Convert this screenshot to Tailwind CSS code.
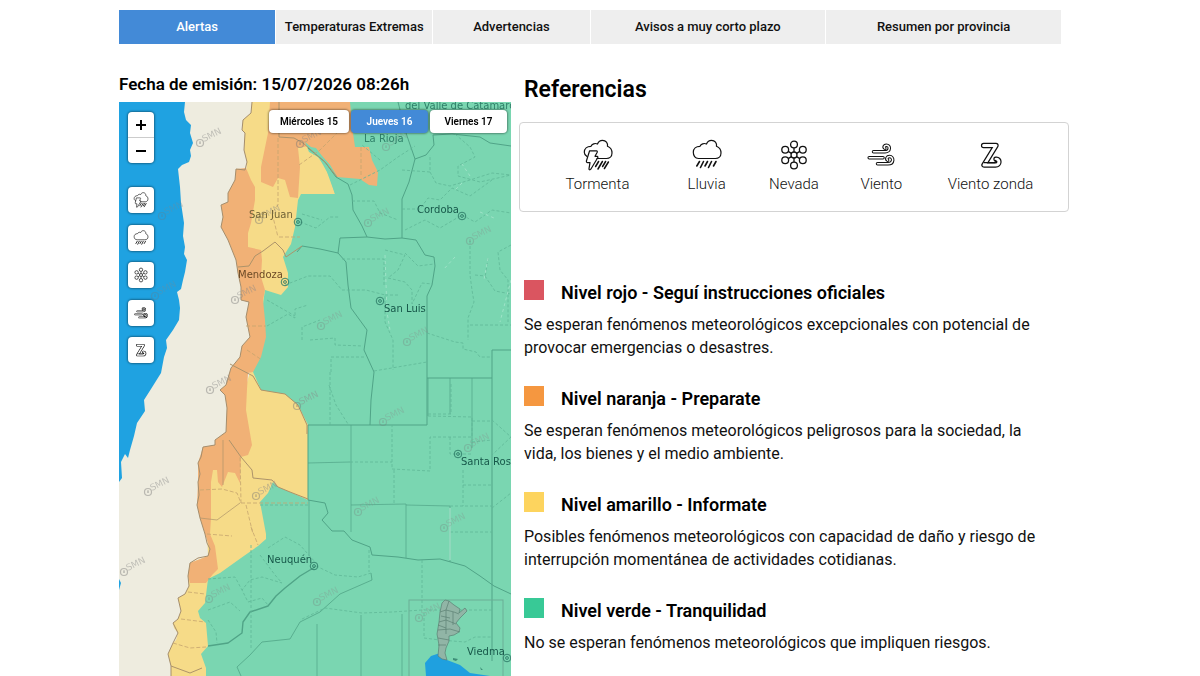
<!DOCTYPE html>
<html lang="es">

<head>
    <meta charset="UTF-8">
    <meta name="viewport" content="width=device-width, initial-scale=1.0">
    <title>Alertas</title>
    <script src="https://cdn.jsdelivr.net/npm/@tailwindcss/browser@4"></script>
</head>

<body class="bg-white font-[Roboto,sans-serif] text-black overflow-x-hidden">

    <!-- Shared icons -->
    <svg class="hidden" aria-hidden="true">
        <symbol id="tormenta" viewBox="0 0 32 32">
            <g fill="none" stroke="currentColor" stroke-width="1.2" stroke-linejoin="round" stroke-linecap="round">
                <path d="M5 17.6C3.2 16.5 2.3 15 2.3 13.3C2.3 9.5 5 7.3 9 7.3C10 5 13 3.8 15.5 5C16.5 2.5 18.5 1.3 20.5 1.3C24 1.3 26 4.3 25.5 7.3C28.5 8.5 30 11 30 14C30 17.5 27.5 19.5 24.5 19.5H15" />
                <path d="M7.6 11.8H14.5C15.3 12 15.5 12.6 15.2 13.3L13 17.3H15.2C16.2 17.6 16 18.6 15.4 19.3L8.8 30.2C8 31.2 6.8 30.8 7 29.6L8 23.6H5.6C4.8 23.5 4.2 22.8 4.4 22Z" />
                <path stroke-width="1.5" d="M16.6 22.5L13.6 27.5M20.4 22.5L16 30M23.6 22.5L20.6 27.5M26.4 23L22.4 29.5" />
            </g>
        </symbol>
        <symbol id="lluvia" viewBox="0 0 32 32">
            <g fill="none" stroke="currentColor" stroke-width="1.2" stroke-linejoin="round" stroke-linecap="round">
                <path d="M7.5 19.5C4 19.5 2.3 16.5 2.3 13.3C2.3 9.5 5 7.3 9 7.3C10 5 13 3.8 15.5 5C16.5 2.5 18.5 1.3 20.5 1.3C24 1.3 26 4.3 25.5 7.3C28.5 8.5 30 11 30 14C30 17.5 27.5 19.5 24.5 19.5Z" />
                <path stroke-width="1.6" d="M8.5 22.5L5.8 27M12.5 22.5L9.5 28.5M16.5 22.5L14 27M20.5 22.5L17.5 28.5M25 22.5L22.5 27" />
            </g>
        </symbol>
        <symbol id="nevada" viewBox="0 0 32 32">
            <g fill="none" stroke="currentColor" stroke-width="1.3">
                <circle cx="16" cy="16" r="3" />
                <circle cx="16" cy="5.5" r="3.4" />
                <circle cx="16" cy="26.5" r="3.4" />
                <circle cx="7.2" cy="10.7" r="3.4" />
                <circle cx="24.8" cy="10.7" r="3.4" />
                <circle cx="7.2" cy="21.3" r="3.4" />
                <circle cx="24.8" cy="21.3" r="3.4" />
                <path d="M16 8.9V13M16 19V23.1M10.2 12.4L13.4 14.4M18.6 17.6L21.8 19.6M21.8 12.4L18.6 14.4M13.4 17.6L10.2 19.6" />
            </g>
        </symbol>
        <symbol id="viento" viewBox="0 0 32 32">
            <g fill="none" stroke-linecap="round">
                <g stroke="currentColor" stroke-width="3.5">
                    <path d="M8.5 12.7H20C25.5 12.7 25.5 6.2 21.3 6.2C19.3 6.2 18.4 8.2 19.8 9.2" />
                    <path d="M4.2 18.7H18" />
                    <path d="M12.5 24.8H23C29 24.8 29 17.6 24.5 17.6C22 17.6 21 20 22.6 21.2" />
                </g>
                <g stroke="#fff" stroke-width="1.5">
                    <path d="M8.5 12.7H20C25.5 12.7 25.5 6.2 21.3 6.2C19.3 6.2 18.4 8.2 19.8 9.2" />
                    <path d="M4.2 18.7H18" />
                    <path d="M12.5 24.8H23C29 24.8 29 17.6 24.5 17.6C22 17.6 21 20 22.6 21.2" />
                </g>
            </g>
        </symbol>
        <symbol id="zonda" viewBox="0 0 32 32">
            <g fill="none" stroke-linejoin="round" stroke-linecap="round">
                <path stroke="currentColor" stroke-width="5.4" d="M8.6 6.5H21L9 26H20.5C25 26 25 19.8 21 20.2" />
                <path stroke="#fff" stroke-width="3" d="M8.6 6.5H21L9 26H20.5C25 26 25 19.8 21 20.2" />
                <path stroke="currentColor" stroke-width="1.1" d="M9 23.6H19.4C21.6 23.4 21.6 21.2 20 21.4" />
            </g>
        </symbol>
    </svg>

    <div class="max-w-[962px] mx-auto pt-[10px]">

        <!-- Tabs -->
        <nav class="mr-5 grid grid-cols-12 gap-px text-[13px] font-medium text-center leading-[34px] text-[#111111] whitespace-nowrap">
            <a href="#" class="col-span-2 bg-[#438ad7] text-white">Alertas</a>
            <a href="#" class="col-span-2 bg-[#eeeeee]">Temperaturas Extremas</a>
            <a href="#" class="col-span-2 bg-[#eeeeee]">Advertencias</a>
            <a href="#" class="col-span-3 bg-[#eeeeee]">Avisos a muy corto plazo</a>
            <a href="#" class="col-span-3 bg-[#eeeeee]">Resumen por provincia</a>
        </nav>

        <main class="mr-3 mt-7 flex gap-2">

            <!-- Map column -->
            <section class="w-[392px] shrink-0">
                <h2 class="text-[17px] leading-6 font-semibold mb-[6px]">Fecha de emisión: 15/07/2026 08:26h</h2>

                <div class="relative overflow-hidden">
                    <svg class="block w-full" viewBox="119 102 392 574" role="img" aria-label="Mapa de alertas">
                        <rect x="119" y="102" width="392" height="574" fill="#eeecdf" />
                        <!-- Ocean -->
                        <path fill="#1fa2e1" d="M119 102H185L184 112L186 120L191 125L190 133L193 143L190 150L191 156L189 162L182 165L178 169L180 187L181 203L184 223L183 236L185 247L184 254L187 260L185 272L183 280L181 289L177 292L179 300L180 308L179 320L173 330L166 340L167 348L164 357L161 373L151 389L144 400L145 411L137 423L134 436L130 450L128 458L125 454L121 462L122 478L119 482Z" />
                        <path fill="#1fa2e1" d="M119 579L121 583L119 590Z" />
                        <!-- Green level -->
                        <path fill="#7ad6b1" d="M511 102H300L290 200L280 250L262 290L250 375L255 480L215 565L203 585L196 612L200 676H511Z" />
                        <!-- Yellow level -->
                        <path fill="#f6db88" d="M252 102L251 113L243 120L242 130L245 133L244 150L247 162L246 172L238 200V235L250 260L262 290L250 372L230 440L205 470L208 556L190 563L188 576L189 586L185 594L178 598L181 611L178 619L173 623L174 628L178 633L176 640L173 643L168 654L171 666V676H206V668L201 654L208 646L206 623L200 618L198 611L205 603L208 579L220 573L241 558L258 546L266 539V534L263 518L260 502L268 493L273 482L278 487L290 492L308 500V425L298 405L285 394L261 390L253 372L265 290L281 295L288 287V273L283 257L291 244L295 227L298 200L301 194H335L327 172L318 156L308 148V102Z" />
                        <!-- Orange level -->
                        <g fill="#f1b176">
                            <path d="M270 102L268 133L261 167V182L273 187L278 178L285 180L290 197L298 198L300 167L298 148L308 146L320 154L330 165L337 177L360 179L369 185L377 186L378 172L372 160L369 147H355L353 133L350 102Z" />
                            <path d="M246 168L251 180L255 187V200L251 223L248 233V247L261 250L262 260L261 277L265 290L263 300L265 320L266 337L261 357L253 372L248 373L247 389L246 410L252 445L248 455L241 457L240 483L235 473L228 472L222 487L218 482L217 470L213 470L211 482V518L210 534L215 546L218 569L213 574L206 583L190 583L188 576L190 563L208 556L210 549L205 534L200 518L197 505L198 482V463L203 447L215 445V440L226 432L227 408L225 395L220 390L226 385L231 368L240 357L242 346L250 337L246 317L249 302L241 300V287L238 273L236 260L228 240L221 227L223 217L221 205L228 202V193L235 180L236 169Z" />
                        </g>
                        <!-- Green wedge next to La Rioja -->
                        <path fill="#7ad6b1" d="M305 142L311 147L316 148L322 156L330 165L338 178L335 194L330 178L324 165L318 157L309 152Z" />

                        <!-- National border -->
                        <path fill="none" stroke="#a58e6d" stroke-width="1" stroke-linejoin="round" d="M252 102L251 113L243 120L242 130L245 133L244 150L247 162L245 170L236 169L235 180L228 193V202L221 205L223 217L221 227L228 240L236 260L238 273L241 287V300L249 302L246 317L250 337L242 346L240 357L231 368L226 385L220 390L225 395L227 408L226 432L215 440V445L203 447L201 457L198 463L200 474L198 482L199 495L197 505L200 518L205 534L207 543L210 549L208 556L198 558L190 563L188 576L189 586L185 594L178 598L181 611L178 619L173 623L178 633L173 643L168 654L171 666V676" />

                        <!-- Province borders -->
                        <g fill="none" stroke="#50a487" stroke-width="1" stroke-linejoin="round">
                            <path d="M308 148L325 162L336 177L348 184L352 195L353 210L362 226L367 237L385 239L402 238L402 199L409 182L415 159L406 133L398 102" />
                            <path d="M415 159L426 155L434 145L433 135L452 134L480 137L490 143L511 146" />
                            <path d="M297 252L302 246L320 249L338 253L340 238L367 237M402 238L416 240L425 255L434 257L435 266L432 285L427 296V425H308" />
                            <path d="M338 253L346 262L348 285L351 308L367 330L364 350L374 372L371 400L370 425" />
                            <path d="M427 378H492V350H511M492 378V661" />
                            <path d="M450 378V414M472 378V448M428 416V378" stroke-width=".7" />
                            <path d="M308 425V500L325 503L328 513L322 520L332 531L344 531L352 540L370 547L372 555L398 557L418 560L440 559L465 566L480 576L494 586L511 594" />
                            <path d="M351 532V425M351 505L406 504V558M406 505L450 506V562M308 463L350 462" stroke-width=".7" />
                            <path d="M315 567L300 576L285 588L276 596L268 606L250 612L243 622L242 633L228 643L208 646" stroke-width="1.4" />
                            <path d="M371 573L372 580L340 594L320 612L300 622L290 639L262 642L250 655L237 667L241 676" stroke-width=".8" />
                            <path d="M361 615V676M402 614V676M317 624V676M309 500V556" stroke-width=".7" />
                        </g>
                        <!-- Borders over warm colors -->
                        <g fill="none" stroke="#ad936a" stroke-width="1">
                            <path d="M238 267L249 266L255 256L263 251L275 242L283 250L286 257L302 246" />
                            <path d="M279 102V137L294 138L303 143L325 162L337 177" />
                            <path d="M230 364L253 376L261 390L285 394L298 405L307 425V434" />
                            <path d="M229 440L241 457L252 470L253 478L272 480L278 487L290 492L308 499" />
                            <path d="M223 440V485M200 518L217 520L240 503" stroke-width=".7" />
                            <path d="M171 666L190 673L202 668" />
                        </g>
                        <!-- Departments -->
                        <g fill="none" stroke="#5fb797" stroke-width=".8" stroke-dasharray="3 2">
                            <path d="M350 185L380 170L398 157L415 146M352 201H374L380 213L398 220M380 160L362 145M402 170L430 172V155M430 172L436 183L450 186L470 180L492 173L511 175" />
                            <path d="M402 209H420L428 198L440 200L452 188L470 196L492 180M405 230L425 220L440 228L462 215L475 222L492 210L511 213M455 134L470 147L475 157L458 166V176L480 182L511 175" />
                            <path d="M300 222L316 228L330 217H340M302 214L322 220M285 285L308 276H330L342 290H366L385 295V322L393 340V370M342 259H384V285M310 340L335 338V345L363 346M330 372V425M331 372V357H364" />
                            <path d="M385 250L405 255L398 270L388 278L405 282L412 290V304L422 283L432 284M405 253L418 266L434 264M385 295H400M374 371L427 362M427 333L455 342L463 343V349L476 352L480 357H492" />
                            <path d="M470 241V275L472 290L474 302L468 318V340M475 275L485 276L495 291L511 294M470 325H511M488 258L485 278M511 245L498 252L500 270L508 280V322" />
                            <path d="M329 385L336 405L348 424M451 384V414H427M428 416L472 417V437H430V471L392 469V425M450 437V454H472M463 470V506M472 421H492M472 442L492 440M463 485H492M394 470V504M350 462H392M450 506H492M450 532H492M492 420L511 437L492 455M492 508L511 493" />
                            <path d="M316 566L335 575L358 577L371 573M369 550V572M422 560V610L392 612L362 613L325 608L300 620M424 613V638L440 640L465 642L475 637H492M424 610H492M308 505H260M251 545V650" />
                            <path d="M268 548L285 537L300 545L315 562M260 555L275 575L282 583L262 577L250 580L242 590L248 602L262 598L268 605M208 579L235 577L242 590M208 610L222 605L230 602L240 611M208 620L216 632L217 643" />
                            <path d="M267 326L288 314L295 318V309L308 305M267 300L295 316M302 340V327L320 320" />
                        </g>
                        <g fill="none" stroke="#c5a56f" stroke-width=".8" stroke-dasharray="4 2">
                            <path d="M278 138V205L272 213L278 237M279 237H300M299 165L320 150L340 130M361 147V176" />
                            <path d="M246 326H266M247 350L262 360M200 490L222 489L237 493L241 503L240 455M241 503H308M246 505L253 534M207 534L232 536M188 592L205 594M181 619L205 622M173 643L190 648L206 647M251 527L258 545" />
                        </g>
                        <!-- Pale roads -->
                        <g fill="none" stroke="#9fe3c8" stroke-width="1" stroke-dasharray="3 3">
                            <path d="M385 255L387 312L390 330M455 257L443 270M488 258L484 280M462 183L455 190M511 280L500 322M480 212L494 218M470 176L462 164" />
                            <path stroke="#b5ecd6" stroke-dasharray="none" d="M450 508V560" />
                        </g>

                        <!-- Inset with the whole country -->
                        <path fill="#1fa0df" d="M426 676L425 663L431 656L440 653L447 660L460 665L470 673L490 676Z" />
                        <rect x="409" y="600" width="94" height="80" fill="none" stroke="#6aae96" />
                        <g fill="#91b5a6" stroke="#5c7f73" stroke-width=".7" stroke-linejoin="round">
                            <path d="M442 603L445 600L449 601L454 605L460 609L459 613L465 608L467 611L460 618L456 623L460 628L459 632L454 635L449 636L449 641L446 648L445 653L447 660L442 659L438 656L439 645L437 634L439 622L440 612Z" />
                            <path fill="none" d="M440 612L446 610L449 601M446 610L454 612L459 614M439 622L446 620L456 624M446 610V634M438 630L450 629L460 632M438 638L449 640M438 645H446M453 612V625M441 616L450 618M438 625L446 628" />
                        </g>
                        <path fill="#3e8f78" d="M453 658L458 659L456 661L453 660ZM480 667L483 670L481 670Z" />

                        <!-- Watermark -->
                        <g font-family="DejaVu Sans, sans-serif" font-size="9">
                            <defs>
                                <g id="smn">
                                    <circle r="3.5" fill="none" stroke="#777" stroke-width="1.2" />
                                    <path d="M0 -2V1M-1 0H1" stroke="#777" />
                                    <text x="4" y="1" fill="#888" transform="rotate(-27)">SMN</text>
                                </g>
                            </defs>
                            <g opacity=".45">
                                <use href="#smn" x="200" y="143" />
                                <use href="#smn" x="300" y="144" />
                                <use href="#smn" x="235" y="300" />
                                <use href="#smn" x="210" y="390" />
                                <use href="#smn" x="297" y="406" />
                                <use href="#smn" x="148" y="492" />
                                <use href="#smn" x="256" y="496" />
                                <use href="#smn" x="124" y="572" />
                                <use href="#smn" x="259" y="220" />
                            </g>
                            <g opacity=".3">
                                <use href="#smn" x="162" y="216" />
                                <use href="#smn" x="155" y="296" />
                                <use href="#smn" x="209" y="599" />
                                <use href="#smn" x="386" y="147" />
                                <use href="#smn" x="368" y="223" />
                                <use href="#smn" x="470" y="241" />
                                <use href="#smn" x="321" y="326" />
                                <use href="#smn" x="407" y="342" />
                                <use href="#smn" x="383" y="422" />
                                <use href="#smn" x="468" y="448" />
                                <use href="#smn" x="358" y="512" />
                                <use href="#smn" x="444" y="528" />
                                <use href="#smn" x="317" y="602" />
                                <use href="#smn" x="419" y="618" />
                            </g>
                        </g>

                        <!-- Cities -->
                        <g fill="none" stroke="#2c7a66" stroke-width=".9">
                            <circle cx="298" cy="222" r="3.8" /><circle cx="298" cy="222" r="1.4" />
                            <circle cx="285" cy="282" r="3.8" /><circle cx="285" cy="282" r="1.4" />
                            <circle cx="462" cy="216" r="3.8" /><circle cx="462" cy="216" r="1.4" />
                            <circle cx="380" cy="301" r="3.8" /><circle cx="380" cy="301" r="1.4" />
                            <circle cx="458" cy="454" r="3.8" /><circle cx="458" cy="454" r="1.4" />
                            <circle cx="314" cy="566" r="3.8" /><circle cx="314" cy="566" r="1.4" />
                            <circle cx="507" cy="658" r="3.8" /><circle cx="507" cy="658" r="1.4" />
                        </g>
                        <g font-family="DejaVu Sans, sans-serif" font-size="10" fill="#17584a">
                            <text x="405" y="109" fill="#2f8069">del Valle de Catamarca</text>
                            <text x="364" y="142" fill="#2f8069">La Rioja</text>
                            <text x="417" y="213">Cordoba</text>
                            <text x="384" y="312">San Luis</text>
                            <text x="461" y="465">Santa Rosa</text>
                            <text x="267" y="563">Neuquén</text>
                            <text x="467" y="655">Viedma</text>
                            <text x="249" y="218" fill="#6f6237">San Juan</text>
                            <text x="238" y="278" fill="#6b4a26">Mendoza</text>
                        </g>
                    </svg>

                    <!-- Zoom control -->
                    <div class="absolute left-[9px] top-[10px] w-[26px] flex flex-col rounded bg-white shadow-[0_0_2px_1px_rgba(0,0,0,0.35)]">
                        <button aria-label="Acercar" class="h-[26px] flex items-center justify-center border-b border-[#cccccc]">
                            <svg class="size-[10px]" viewBox="0 0 10 10" stroke="#000" stroke-width="2"><path d="M5 0V10M0 5H10" /></svg>
                        </button>
                        <button aria-label="Alejar" class="h-[25px] flex items-center justify-center">
                            <svg class="size-[10px]" viewBox="0 0 10 10" stroke="#000" stroke-width="2"><path d="M0 5H10" /></svg>
                        </button>
                    </div>

                    <!-- Phenomenon filters -->
                    <div class="absolute left-[9px] top-[85px] h-[176px] flex flex-col justify-between">
                        <button aria-label="Tormenta" class="size-[26px] flex items-center justify-center rounded bg-white shadow-[0_0_2px_1px_rgba(0,0,0,0.35)]"><svg class="size-4"><use href="#tormenta" /></svg></button>
                        <button aria-label="Lluvia" class="size-[26px] flex items-center justify-center rounded bg-white shadow-[0_0_2px_1px_rgba(0,0,0,0.35)]"><svg class="size-4"><use href="#lluvia" /></svg></button>
                        <button aria-label="Nevada" class="size-[26px] flex items-center justify-center rounded bg-white shadow-[0_0_2px_1px_rgba(0,0,0,0.35)]"><svg class="size-4"><use href="#nevada" /></svg></button>
                        <button aria-label="Viento" class="size-[26px] flex items-center justify-center rounded bg-white shadow-[0_0_2px_1px_rgba(0,0,0,0.35)]"><svg class="size-4"><use href="#viento" /></svg></button>
                        <button aria-label="Viento zonda" class="size-[26px] flex items-center justify-center rounded bg-white shadow-[0_0_2px_1px_rgba(0,0,0,0.35)]"><svg class="size-4"><use href="#zonda" /></svg></button>
                    </div>

                    <!-- Day buttons -->
                    <div class="absolute right-1 top-2 flex gap-[2px] text-[10px] leading-[23px] font-semibold text-center">
                        <button class="w-20 rounded bg-white shadow-[0_0_2px_1px_rgba(0,0,0,0.35)]">Miércoles 15</button>
                        <button class="w-[77px] rounded bg-[#438ad7] text-white shadow-[0_0_2px_1px_rgba(0,0,0,0.35)]">Jueves 16</button>
                        <button class="w-[77px] rounded bg-white shadow-[0_0_2px_1px_rgba(0,0,0,0.35)]">Viernes 17</button>
                    </div>
                </div>
            </section>

            <!-- References column -->
            <section class="grow">
                <h2 class="pl-[5px] pt-1 text-[23px] leading-7 font-semibold">Referencias</h2>

                <ul class="mt-[18px] h-[90px] px-3 pt-4 grid grid-cols-12 text-[15px] leading-5 font-light text-center text-[#111111] border border-[#d3d3d3] rounded">
                    <li class="col-span-3"><svg class="size-8 mx-auto mb-[3px]"><use href="#tormenta" /></svg>Tormenta</li>
                    <li class="col-span-2"><svg class="size-8 mx-auto mb-[3px]"><use href="#lluvia" /></svg>Lluvia</li>
                    <li class="col-span-2"><svg class="size-8 mx-auto mb-[3px]"><use href="#nevada" /></svg>Nevada</li>
                    <li class="col-span-2"><svg class="size-8 mx-auto mb-[3px]"><use href="#viento" /></svg>Viento</li>
                    <li class="col-span-3"><svg class="size-8 mx-auto mb-[3px]"><use href="#zonda" /></svg>Viento zonda</li>
                </ul>

                <!-- Levels -->
                <div class="mt-[68px] pl-[5px] pr-6 flex flex-col gap-[27px] text-[16px] leading-[23px] text-[#111111]">
                    <article>
                        <h3 class="flex gap-[17px] mb-[7px] text-[18px] leading-[26px] font-semibold text-black"><span class="size-5 bg-[#da5560]"></span>Nivel rojo - Seguí instrucciones oficiales</h3>
                        <p>Se esperan fenómenos meteorológicos excepcionales con potencial de provocar emergencias o desastres.</p>
                    </article>
                    <article>
                        <h3 class="flex gap-[17px] mb-[7px] text-[18px] leading-[26px] font-semibold text-black"><span class="size-5 bg-[#f59740]"></span>Nivel naranja - Preparate</h3>
                        <p>Se esperan fenómenos meteorológicos peligrosos para la sociedad, la vida, los bienes y el medio ambiente.</p>
                    </article>
                    <article>
                        <h3 class="flex gap-[17px] mb-[7px] text-[18px] leading-[26px] font-semibold text-black"><span class="size-5 bg-[#fdd45e]"></span>Nivel amarillo - Informate</h3>
                        <p>Posibles fenómenos meteorológicos con capacidad de daño y riesgo de interrupción momentánea de actividades cotidianas.</p>
                    </article>
                    <article>
                        <h3 class="flex gap-[17px] mb-[7px] text-[18px] leading-[26px] font-semibold text-black"><span class="size-5 bg-[#38c996]"></span>Nivel verde - Tranquilidad</h3>
                        <p>No se esperan fenómenos meteorológicos que impliquen riesgos.</p>
                    </article>
                </div>
            </section>
        </main>
    </div>

</body>

</html>
